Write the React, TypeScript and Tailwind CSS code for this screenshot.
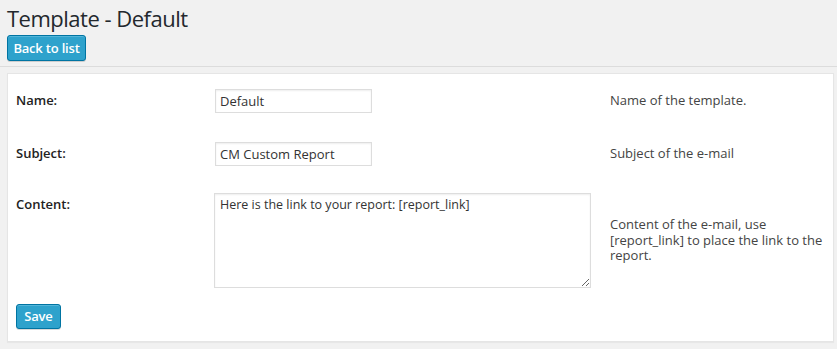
import React from "react";

export default function App() {
  const font = { fontFamily: '"Open Sans", "Noto Sans", sans-serif' };
  return (
    <div className="w-[837px] h-[349px] bg-[#f1f1f1] overflow-hidden text-[#444]" style={font}>
      <div className="px-[7px]">
        <h1 className="text-[22px] tracking-[-0.5px] leading-[29px] font-normal text-[#23282d] pt-[4px] h-[35px]">Template - Default</h1>
        <button className="h-[26px] w-[79px] rounded-[3px] bg-[#2ea2cc] border border-[#0074a2] text-white text-[13px] font-semibold tracking-[-0.2px] leading-[24px] shadow-[inset_0_1px_0_rgba(120,200,230,0.5),0_1px_0_rgba(0,0,0,0.15)]">
          Back to list
        </button>
      </div>
      <div className="mt-[5px] border-t border-[#dcdcdc]" />
      <div className="ml-[7px] mt-[6px] w-[827px] h-[269px] bg-white border border-[#e5e5e5] shadow-[0_1px_1px_rgba(0,0,0,0.04)] pl-[8px]">
        <div className="flex items-center h-[53px]">
          <div className="w-[199px] text-[13px] font-semibold text-[#222]">Name:</div>
          <div className="w-[395px]">
            <input readOnly value="Default" className="w-[157px] h-[24px] border border-[#ddd] shadow-[inset_0_1px_2px_rgba(0,0,0,0.07)] px-[4px] text-[13px] text-[#333] outline-none" style={font} />
          </div>
          <div className="text-[13px] text-[#444]">Name of the template.</div>
        </div>
        <div className="flex items-center h-[53px]">
          <div className="w-[199px] text-[13px] font-semibold text-[#222]">Subject:</div>
          <div className="w-[395px]">
            <input readOnly value="CM Custom Report" className="w-[157px] h-[24px] border border-[#ddd] shadow-[inset_0_1px_2px_rgba(0,0,0,0.07)] px-[4px] text-[13px] text-[#333] outline-none" style={font} />
          </div>
          <div className="text-[13px] text-[#444]">Subject of the e-mail</div>
        </div>
        <div className="flex items-center h-[123px] pt-[13px] pb-[15px]">
          <div className="w-[199px] self-start pt-[1px] text-[13px] leading-[20px] font-semibold text-[#222]">Content:</div>
          <div className="w-[395px] h-full">
            <textarea readOnly value="Here is the link to your report: [report_link]" className="block w-[377px] h-[95px] -ml-[1px] border border-[#ddd] shadow-[inset_0_1px_2px_rgba(0,0,0,0.07)] px-[5px] py-[1px] text-[12.5px] leading-[20px] text-[#333] outline-none" style={font} />
          </div>
          <div className="w-[220px] text-[13px] leading-[15.5px] text-[#444]">
            Content of the e-mail, use [report_link] to place the link to the report.
          </div>
        </div>
        <button className="mt-[1px] h-[25px] w-[45px] rounded-[3px] bg-[#2ea2cc] border border-[#0074a2] text-white text-[13px] font-semibold tracking-[-0.2px] leading-[23px] shadow-[inset_0_1px_0_rgba(120,200,230,0.5),0_1px_0_rgba(0,0,0,0.15)]">
          Save
        </button>
      </div>
    </div>
  );
}
